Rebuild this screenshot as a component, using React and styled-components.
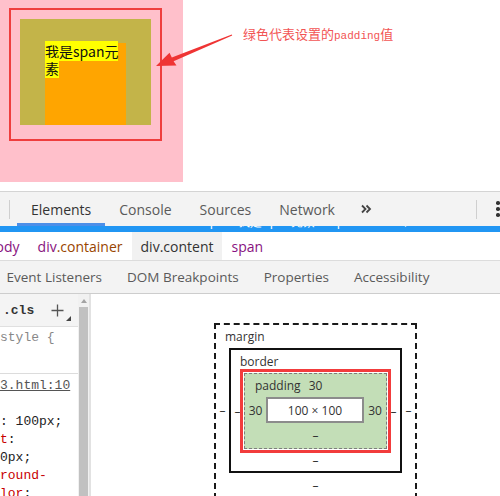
import React from "react";
import styled, { createGlobalStyle } from "styled-components";

const GlobalStyle = createGlobalStyle`
  html, body { margin: 0; padding: 0; background: #fff; }
  body { width: 500px; height: 496px; overflow: hidden; font-family: "Open Sans", "Noto Sans", sans-serif; }
`;

const Page = styled.div`
  width: 500px;
  height: 496px;
  display: flex;
  flex-direction: column;
  overflow: hidden;
`;

/* ---------- demo area ---------- */
const Demo = styled.section`
  position: relative;
  height: 191px;
  display: flex;
  flex-shrink: 0;
`;

const PinkBox = styled.div`
  width: 183px;
  height: 182px;
  background: #ffc0cb;
  padding: 19px 0 0 20px;
  box-sizing: border-box;
`;

const OliveBox = styled.div`
  width: 131px;
  height: 106px;
  background: #c3b449;
  padding: 24px 0 0 25px;
  box-sizing: border-box;
`;

const OrangeBox = styled.div`
  width: 81px;
  height: 82px;
  background: #ffa500;
  font-family: "Noto Sans CJK SC", "Noto Sans", sans-serif;
  font-size: 14px;
  line-height: 17px;
  color: #111;
`;

const SpanText = styled.span`
  background: #ffff00;
`;

const AnnoRect = styled.div`
  position: absolute;
  left: 9px;
  top: 8px;
  width: 153px;
  height: 133px;
  border: 2px solid #ef3e3e;
  box-sizing: border-box;
`;

const ArrowSvg = styled.svg`
  position: absolute;
  left: 150px;
  top: 28px;
`;

const Note = styled.div`
  margin: 26px 0 0 60px;
  font-family: "Noto Sans CJK SC", sans-serif;
  font-size: 13px;
  line-height: 16px;
  color: #f25454;
  white-space: nowrap;
`;

const NoteMono = styled.span`
  font-family: "Liberation Mono", monospace;
  font-size: 11px;
`;

/* ---------- devtools ---------- */
const DevTools = styled.div`
  flex: 1;
  min-height: 0;
  display: flex;
  flex-direction: column;
  font-family: "Open Sans", "Noto Sans", sans-serif;
`;

const MainToolbar = styled.div`
  height: 34px;
  border-top: 1px solid #d4d4d4;
  background: #f3f3f3;
  display: flex;
  align-items: stretch;
  flex-shrink: 0;
`;

const VDivider = styled.div`
  width: 1px;
  height: 19px;
  align-self: center;
  background: #cfcfcf;
  margin: 0 ${(p) => p.$right || 0}px 0 ${(p) => p.$left || 0}px;
`;

const Tab = styled.div`
  display: flex;
  align-items: center;
  padding: 3px 14px 0;
  font-size: 14px;
  white-space: nowrap;
  color: ${(p) => (p.$active ? "#333" : "#5a5a5a")};
  border-bottom: 3px solid ${(p) => (p.$active ? "#4d8fe8" : "transparent")};
`;

const MoreBtn = styled.div`
  display: flex;
  align-items: center;
  padding: 0 8px 0 12px;
  color: #444;
`;

const Spacer = styled.div`
  flex: 1;
`;

const Dots = styled.div`
  display: flex;
  flex-direction: column;
  justify-content: center;
  gap: 2.5px;
  margin: 0 -6px 0 19px;
  width: 10px;
`;

const Dot = styled.span`
  width: 3.5px;
  height: 3.5px;
  border-radius: 50%;
  background: #333;
`;

const SelectedNode = styled.div`
  height: 6px;
  background: #2196f3;
  overflow: hidden;
  flex-shrink: 0;
`;

const SelectedNodeText = styled.div`
  margin-top: -10px;
  padding-left: 8px;
  font-family: "Liberation Mono", monospace;
  font-size: 12px;
  line-height: 14px;
  color: #fff;
  white-space: pre;
`;

const Crumbs = styled.div`
  height: 28px;
  display: flex;
  align-items: stretch;
  border-bottom: 1px solid #dcdcdc;
  flex-shrink: 0;
  margin-left: -22px;
`;

const Crumb = styled.div`
  display: flex;
  align-items: center;
  padding: 0 9px;
  font-size: 14px;
  white-space: nowrap;
  background: ${(p) => (p.$active ? "#f1f1f1" : "transparent")};
  color: ${(p) => (p.$active ? "#333" : "#881280")};
`;

const CrumbClass = styled.span`
  color: ${(p) => (p.$active ? "#333" : "#994500")};
`;

const SubTabs = styled.div`
  height: 32px;
  display: flex;
  align-items: stretch;
  background: #f3f3f3;
  border-bottom: 1px solid #cdcdcd;
  flex-shrink: 0;
  margin-left: -6px;
`;

const SubTab = styled.div`
  display: flex;
  align-items: center;
  padding: 0 12.5px;
  font-size: 13.5px;
  white-space: nowrap;
  color: #5a5a5a;
`;

const Panes = styled.div`
  flex: 1;
  min-height: 0;
  display: flex;
`;

const StylesPane = styled.div`
  width: 78px;
  flex-shrink: 0;
  overflow: hidden;
  font-family: "Liberation Mono", monospace;
  font-size: 13px;
`;

const StylesBar = styled.div`
  height: 32px;
  background: #f4f4f4;
  border-bottom: 1px solid #e0e0e0;
  display: flex;
  align-items: center;
  position: relative;
`;

const Cls = styled.span`
  font-weight: bold;
  color: #333;
  margin-left: 3px;
`;

const PlusIcon = styled.svg`
  margin-left: 17px;
`;

const Corner = styled.span`
  position: absolute;
  left: 66px;
  top: 22px;
  width: 0;
  height: 0;
  border-left: 5px solid transparent;
  border-bottom: 5px solid #444;
`;

const RuleSection = styled.div`
  padding: ${(p) => p.$pad};
  border-bottom: ${(p) => (p.$divider ? "1px solid #dcdcdc" : "none")};
`;

const CodeLine = styled.div`
  height: 18px;
  line-height: 18px;
  white-space: pre;
  color: ${(p) => p.$color || "#222"};
  text-decoration: ${(p) => (p.$link ? "underline" : "none")};
`;

const PropName = styled.span`
  color: #c80000;
`;

const Scrollbar = styled.div`
  width: 11px;
  flex-shrink: 0;
  background: #f1f1f1;
  border-right: 2px solid #e2e2e2;
  display: flex;
  flex-direction: column;
  align-items: center;
`;

const ScrollArrow = styled.span`
  margin-top: 5px;
  width: 0;
  height: 0;
  border-left: 3px solid transparent;
  border-right: 3px solid transparent;
  border-bottom: 4px solid #a3a3a3;
`;

const ScrollThumb = styled.div`
  margin-top: 4px;
  width: 9px;
  flex: 1;
  background: #c1c1c1;
`;

const MetricsPane = styled.div`
  flex: 1;
  padding: 29px 0 0 123px;
  font-size: 12px;
  color: #333;
`;

const kinds = {
  margin: { border: "2px dashed #1a1a1a", bg: "transparent", cols: "13px auto 13px", rows: "23px auto 24px" },
  border: { border: "2px solid #111", bg: "#fff", cols: "13px auto 13px", rows: "23px auto 22px" },
  padding: { border: "1px dashed #7d7d7d", bg: "#c3deb7", cols: "21px auto 22px", rows: "23px auto 25px" },
};

const BoxFrame = styled.div`
  display: grid;
  width: max-content;
  grid-template-columns: ${(p) => kinds[p.$kind].cols};
  grid-template-rows: ${(p) => kinds[p.$kind].rows};
  border: ${(p) => kinds[p.$kind].border};
  background: ${(p) => kinds[p.$kind].bg};
  outline: ${(p) => (p.$highlight ? "3px solid #f23c3c" : "none")};
  outline-offset: 1px;
`;

const TopRow = styled.div`
  grid-column: 1 / -1;
  display: grid;
  grid-template-columns: 1fr auto 1fr;
  align-items: center;
`;

const BoxLabel = styled.span`
  justify-self: start;
  padding-left: ${(p) => p.$pad || 9}px;
`;

const Cell = styled.div`
  display: flex;
  align-items: center;
  justify-content: center;
  grid-column: ${(p) => p.$span || "auto"};
`;

const ContentBox = styled.div`
  width: 98px;
  height: 26px;
  box-sizing: border-box;
  border: 2px solid #8c8c8c;
  background: #fff;
  display: flex;
  align-items: center;
  justify-content: center;
`;

function MetricBox({ kind, label, value, labelPad, highlight, children, side = "–", bottom = "–" }) {
  return (
    <BoxFrame $kind={kind} $highlight={highlight}>
      <TopRow>
        <BoxLabel $pad={labelPad}>{label}</BoxLabel>
        <span>{value}</span>
        <span />
      </TopRow>
      <Cell>{side}</Cell>
      <Cell>{children}</Cell>
      <Cell>{side}</Cell>
      <Cell $span="1 / -1">{bottom}</Cell>
    </BoxFrame>
  );
}

export default function App() {
  return (
    <Page>
      <GlobalStyle />
      <Demo>
        <PinkBox>
          <OliveBox>
            <OrangeBox>
              <SpanText>我是span元素</SpanText>
            </OrangeBox>
          </OliveBox>
        </PinkBox>
        <AnnoRect />
        <ArrowSvg width="90" height="46" viewBox="0 0 90 46">
          <polygon
            points="6,38 26.5,37.5 23.6,33.2 82.2,7.6 81.8,6.6 21.8,29.4 19.5,24.8"
            fill="#ef3434"
          />
        </ArrowSvg>
        <Note>
          绿色代表设置的<NoteMono>padding</NoteMono>值
        </Note>
      </Demo>

      <DevTools>
        <MainToolbar>
          <VDivider $left={9} $right={7} />
          <Tab $active>Elements</Tab>
          <Tab>Console</Tab>
          <Tab>Sources</Tab>
          <Tab>Network</Tab>
          <MoreBtn>
            <svg width="11" height="10" viewBox="0 0 11 10">
              <path d="M1 1.5 L4.5 5 L1 8.5 M5.5 1.5 L9 5 L5.5 8.5" fill="none" stroke="#444" strokeWidth="1.8" />
            </svg>
          </MoreBtn>
          <Spacer />
          <VDivider />
          <Dots>
            <Dot />
            <Dot />
            <Dot />
          </Dots>
        </MainToolbar>

        <SelectedNode>
          <SelectedNodeText>{'  <div class="content">   <span>我是span元素</span>  == $0'}</SelectedNodeText>
        </SelectedNode>

        <Crumbs>
          <Crumb>body</Crumb>
          <Crumb>
            div<CrumbClass>.container</CrumbClass>
          </Crumb>
          <Crumb $active>
            div<CrumbClass $active>.content</CrumbClass>
          </Crumb>
          <Crumb>span</Crumb>
        </Crumbs>

        <SubTabs>
          <SubTab>Event Listeners</SubTab>
          <SubTab>DOM Breakpoints</SubTab>
          <SubTab>Properties</SubTab>
          <SubTab>Accessibility</SubTab>
        </SubTabs>

        <Panes>
          <StylesPane>
            <StylesBar>
              <Cls>.cls</Cls>
              <PlusIcon width="13" height="13" viewBox="0 0 13 13">
                <path d="M6.5 0.5 V12.5 M0.5 6.5 H12.5" stroke="#555" strokeWidth="1.3" />
              </PlusIcon>
              <Corner />
            </StylesBar>
            <RuleSection $pad="2px 0 8px" $divider>
              <CodeLine $color="#888">style {"{"}</CodeLine>
              <CodeLine> </CodeLine>
            </RuleSection>
            <RuleSection $pad="3px 0 0">
              <CodeLine $color="#555" $link>3.html:10</CodeLine>
              <CodeLine> </CodeLine>
              <CodeLine>: 100px;</CodeLine>
              <CodeLine>
                <PropName>t</PropName>:
              </CodeLine>
              <CodeLine>0px;</CodeLine>
              <CodeLine>
                <PropName>round-</PropName>
              </CodeLine>
              <CodeLine>
                <PropName>lor</PropName>:
              </CodeLine>
            </RuleSection>
          </StylesPane>
          <Scrollbar>
            <ScrollArrow />
            <ScrollThumb />
          </Scrollbar>
          <MetricsPane>
            <MetricBox kind="margin" label="margin">
              <MetricBox kind="border" label="border">
                <MetricBox kind="padding" label="padding" value="30" labelPad={10} highlight side="30">
                  <ContentBox>100 × 100</ContentBox>
                </MetricBox>
              </MetricBox>
            </MetricBox>
          </MetricsPane>
        </Panes>
      </DevTools>
    </Page>
  );
}
